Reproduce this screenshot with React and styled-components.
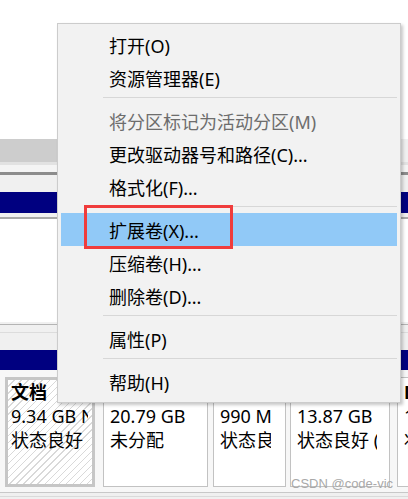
import React from 'react';
import styled, { createGlobalStyle } from 'styled-components';

const GlobalStyle = createGlobalStyle`
  html, body {
    margin: 0;
    padding: 0;
    background: #ffffff;
  }
  body {
    font-family: "Noto Sans", "Noto Sans CJK SC", sans-serif;
  }
`;

const Page = styled.div`
  position: relative;
  width: 408px;
  height: 499px;
  overflow: hidden;
  background: #f0f0f0;
  font-family: "Noto Sans", "Noto Sans CJK SC", sans-serif;
`;

const ListPane = styled.div`
  height: 139px;
  background: #ffffff;
`;

const HScroll = styled.div`
  display: flex;
  height: 23px;
  background: #f0f0f0;
`;

const Thumb = styled.div`
  width: 340px;
  background: #cdcdcd;
`;

const Splitter = styled.div`
  height: 10px;
  background: linear-gradient(to bottom, #e2e2e2 0 3px, #f4f4f4 3px);
  border-bottom: 3px solid #8c8c8c;
`;

const DiskGap = styled.div`
  height: ${(p) => p.$h}px;
  background: #f0f0f0;
`;

const VolumeStrip = styled.div`
  height: ${(p) => p.$h}px;
  background: #000080;
`;

const UpperPartitions = styled.div`
  margin-top: 4px;
  height: 103px;
  background: #ffffff;
  border-top: 2px solid #a9a9a9;
`;

const LowerHeader = styled.div`
  height: 28px;
  background: linear-gradient(
    to bottom,
    #f0f0f0 0 2px,
    #b4b4b4 2px 3px,
    #f0f0f0 3px 10px,
    #dcdcdc 10px 11px,
    #f0f0f0 11px
  );
`;

const PartitionRow = styled.div`
  display: flex;
  padding: 7px 0 0 5px;
  background: #f7f7f7;
`;

const PartitionBox = styled.div`
  box-sizing: border-box;
  flex: none;
  width: ${(p) => p.$w}px;
  height: 110px;
  margin-right: ${(p) => p.$gap || 0}px;
  padding: ${(p) => (p.$selected ? `0 ${p.$pr}px 0 3px` : `2px ${p.$pr}px 0 6px`)};
  border: ${(p) => (p.$selected ? '3px solid #c6c6c6' : '1px solid #c2c2c2')};
  background: ${(p) =>
    p.$selected
      ? 'repeating-linear-gradient(135deg, #ffffff 0 4px, #d9d9d9 4px 5px)'
      : '#ffffff'};
`;

const PartitionText = styled.div`
  overflow: hidden;
  white-space: nowrap;
  font-size: 18px;
  line-height: 24px;
  color: #000000;
  font-weight: ${(p) => (p.$bold ? 700 : 400)};
  min-height: 24px;
`;

const Footer = styled.div`
  height: 12px;
  background: linear-gradient(
    to bottom,
    #f7f7f7 0 5px,
    #c8c8c8 5px 6px,
    #f0f0f0 6px 9px,
    #dadada 9px 10px,
    #f0f0f0 10px
  );
`;

const Menu = styled.div`
  position: absolute;
  left: 57px;
  top: 23px;
  width: 344px;
  box-sizing: border-box;
  padding: 4px 3px;
  background: #f2f2f2;
  border: 1px solid #cccccc;
  box-shadow: 2px 2px 3px rgba(0, 0, 0, 0.22);
`;

const MenuItem = styled.div`
  display: flex;
  align-items: center;
  height: 33px;
  padding: 1px 0 0 48px;
  box-sizing: border-box;
  font-size: 18px;
  color: ${(p) => (p.$disabled ? '#6d6d6d' : '#000000')};
  background: ${(p) => (p.$active ? '#91c9f7' : 'transparent')};
  white-space: nowrap;
`;

const Separator = styled.div`
  height: 1px;
  margin: 3px 0 6px 42px;
  background: #d7d7d7;
`;

const Highlight = styled.div`
  position: absolute;
  left: 26px;
  top: 181px;
  width: 149px;
  height: 44px;
  box-sizing: border-box;
  border: 3px solid #f03c3c;
  pointer-events: none;
`;

const Watermark = styled.div`
  position: absolute;
  left: 291px;
  top: 476px;
  font-family: "Liberation Sans", Arial, sans-serif;
  font-size: 13px;
  line-height: 16px;
  color: #a9a9a9;
  white-space: nowrap;
`;

const partitions = [
  { name: '文档', size: '9.34 GB NTFS', status: '状态良好 (基本数据分区)', w: 90, gap: 8, pr: 4, selected: true },
  { name: '', size: '20.79 GB', status: '未分配', w: 105, gap: 5, pr: 8 },
  { name: '', size: '990 MB NTFS', status: '状态良好 (恢复分区)', w: 73, gap: 4, pr: 14 },
  { name: '', size: '13.87 GB NTFS', status: '状态良好 (基本数据分区)', w: 100, gap: 7, pr: 12 },
  { name: 'Data (D:)', size: '100 GB NTFS', status: '状态良好', w: 100, pr: 8 },
];

const menuItems = [
  { label: '打开(O)' },
  { label: '资源管理器(E)' },
  { sep: true },
  { label: '将分区标记为活动分区(M)', disabled: true },
  { label: '更改驱动器号和路径(C)...' },
  { label: '格式化(F)...' },
  { sep: true },
  { label: '扩展卷(X)...', active: true },
  { label: '压缩卷(H)...' },
  { label: '删除卷(D)...' },
  { sep: true },
  { label: '属性(P)' },
  { sep: true },
  { label: '帮助(H)' },
];

export default function App() {
  return (
    <>
      <GlobalStyle />
      <Page>
        <ListPane />
        <HScroll>
          <Thumb />
        </HScroll>
        <Splitter />
        <DiskGap $h={17} />
        <VolumeStrip $h={21} />
        <UpperPartitions />
        <LowerHeader />
        <VolumeStrip $h={20} />
        <PartitionRow>
          {partitions.map((p, i) => (
            <PartitionBox key={i} $w={p.w} $gap={p.gap} $pr={p.pr} $selected={p.selected}>
              <PartitionText $bold>{p.name || '\u00a0'}</PartitionText>
              <PartitionText>{p.size}</PartitionText>
              <PartitionText>{p.status}</PartitionText>
            </PartitionBox>
          ))}
        </PartitionRow>
        <Footer />

        <Menu>
          {menuItems.map((item, i) =>
            item.sep ? (
              <Separator key={i} />
            ) : (
              <MenuItem key={i} $disabled={item.disabled} $active={item.active}>
                {item.label}
              </MenuItem>
            )
          )}
          <Highlight />
        </Menu>

        <Watermark>CSDN @code-vic</Watermark>
      </Page>
    </>
  );
}
